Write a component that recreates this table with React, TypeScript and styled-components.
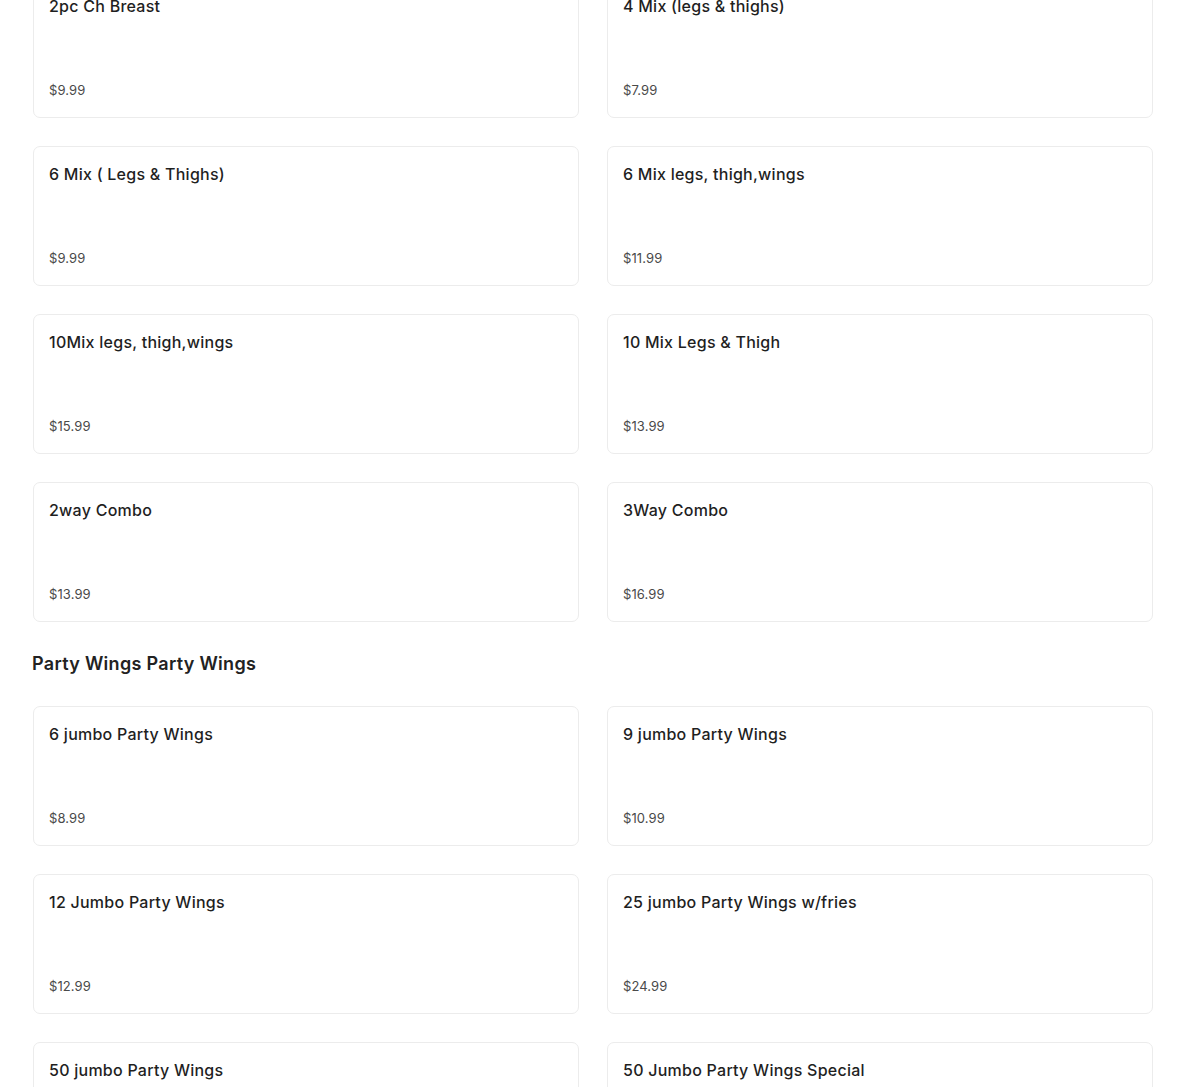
import styled, { createGlobalStyle } from 'styled-components';

type Item = {
  name: string;
  price: string;
};

type Section = {
  title?: string;
  items: Item[];
};

const SECTIONS: Section[] = [
  {
    items: [
      { name: '2pc Ch Breast', price: '$9.99' },
      { name: '4 Mix (legs & thighs)', price: '$7.99' },
      { name: '6 Mix ( Legs & Thighs)', price: '$9.99' },
      { name: '6 Mix legs, thigh,wings', price: '$11.99' },
      { name: '10Mix legs, thigh,wings', price: '$15.99' },
      { name: '10 Mix Legs & Thigh', price: '$13.99' },
      { name: '2way Combo', price: '$13.99' },
      { name: '3Way Combo', price: '$16.99' },
    ],
  },
  {
    title: 'Party Wings Party Wings',
    items: [
      { name: '6 jumbo Party Wings', price: '$8.99' },
      { name: '9 jumbo Party Wings', price: '$10.99' },
      { name: '12 Jumbo Party Wings', price: '$12.99' },
      { name: '25 jumbo Party Wings w/fries', price: '$24.99' },
      { name: '50 jumbo Party Wings', price: '$49.99' },
      { name: '50 Jumbo Party Wings Special', price: '$54.99' },
    ],
  },
];

const GlobalStyle = createGlobalStyle`
  html, body {
    margin: 0;
    padding: 0;
    background: #ffffff;
    overflow: hidden;
  }
  body {
    font-family: Inter, "Open Sans", sans-serif;
    color: #1f1f1f;
  }
`;

export default function App() {
  return (
    <>
      <GlobalStyle />
      <Page>
        {SECTIONS.map((section, index) => (
          <MenuSection key={`section-${index}`}>
            {section.title && <SectionTitle>{section.title}</SectionTitle>}
            <Grid>
              {section.items.map((item, index2) => (
                <Card key={`item-${index2}`}>
                  <ItemName>{item.name}</ItemName>
                  <ItemPrice>{item.price}</ItemPrice>
                </Card>
              ))}
            </Grid>
          </MenuSection>
        ))}
      </Page>
    </>
  );
}

// page is scrolled a little, first row of cards starts above the fold
const Page = styled.div`
  padding: 0 32px 0 33px;
  margin-top: -22px;
  display: flex;
  flex-direction: column;
`;

const MenuSection = styled.section`
  display: flex;
  flex-direction: column;
`;

const SectionTitle = styled.h2`
  margin: 28px 0 28px -1px;
  height: 28px;
  line-height: 28px;
  font-size: 18px;
  font-weight: 600;
  color: #222222;
  letter-spacing: 0.3px;
`;

const Grid = styled.div`
  display: grid;
  grid-template-columns: 1fr 1fr;
  gap: 28px;
`;

const Card = styled.div`
  height: 140px;
  box-sizing: border-box;
  padding: 15px;
  border: 1px solid #ececec;
  border-radius: 7px;
  background: #ffffff;
  display: flex;
  flex-direction: column;
  justify-content: space-between;
`;

const ItemName = styled.div`
  font-size: 16px;
  line-height: 24px;
  font-weight: 500;
  color: #1f1f1f;
  letter-spacing: 0.25px;
`;

const ItemPrice = styled.div`
  font-size: 13px;
  line-height: 24px;
  font-weight: 400;
  color: #4a4a4a;
  letter-spacing: 0.1px;
`;
